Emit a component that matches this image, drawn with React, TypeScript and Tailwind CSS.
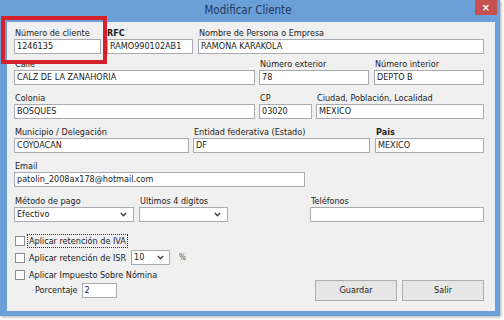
import React from "react";

const font = {
  fontFamily: '"DejaVu Sans Condensed", "Liberation Sans", Arial, sans-serif',
};

const Chevron = () => (
  <svg width="7" height="5" viewBox="0 0 7 5" className="shrink-0">
    <polyline points="0.8,1 3.5,3.8 6.2,1" fill="none" stroke="#3c3c3c" strokeWidth="1.3" />
  </svg>
);

interface FieldProps {
  label: string;
  value?: string;
  w: string;
  bold?: boolean;
  labelPad?: string;
}

const Field = ({ label, value, w, bold, labelPad }: FieldProps) => (
  <div className={`flex flex-col ${w}`}>
    <div className={`h-[12px] leading-[12px] text-[9px] text-[#1b1b1b] whitespace-nowrap ${labelPad ?? "pl-[1px]"} ${bold ? "font-bold" : ""}`}>
      {label}
    </div>
    <div className="h-[15px] bg-white border border-[#a9abb0] flex items-center px-[2px] text-[9px] text-[#1b1b1b] whitespace-nowrap overflow-hidden">
      {value}
    </div>
  </div>
);

const Select = ({ label, value, w }: { label?: string; value: string; w: string }) => (
  <div className={`flex flex-col ${w}`}>
    {label && (
      <div className="h-[12px] leading-[12px] text-[9px] text-[#1b1b1b] whitespace-nowrap pl-[1px]">{label}</div>
    )}
    <div className="h-[15px] bg-white border border-[#a9abb0] flex items-center justify-between pl-[2px] pr-[6px] text-[9px] text-[#1b1b1b]">
      <span>{value}</span>
      <Chevron />
    </div>
  </div>
);

const Check = ({ children, focused }: { children: React.ReactNode; focused?: boolean }) => (
  <div className="h-[17px] flex items-center pl-[1px]">
    <div className="w-[10px] h-[10px] border border-[#8e8e8e] bg-[#fbfbfb] shrink-0" />
    <div
      className={`ml-[3px] text-[9px] text-[#1b1b1b] leading-[12px] whitespace-nowrap px-[1px] ${
        focused ? "outline outline-1 outline-dotted outline-[#333]" : ""
      }`}
    >
      {children}
    </div>
  </div>
);

const Btn = ({ text }: { text: string }) => (
  <div className="w-[82px] h-[21px] bg-[#e6e6e6] border border-[#adadad] flex items-center justify-center text-[9px] text-[#1b1b1b]">
    {text}
  </div>
);

export default function App() {
  return (
    <div className="w-[504px] h-[320px] bg-white relative overflow-hidden" style={font}>
      <div className="w-[500px] h-[316px] bg-[#6b9fd8] flex flex-col pl-[7px] pr-[5px] pb-[5px] shadow-[1px_1px_3px_rgba(0,0,0,0.35)]">
        <div className="h-[22px] relative flex items-center justify-center">
          <span className="text-[11.5px] text-[#23395a] pr-[6px]">Modificar Cliente</span>
          <div className="absolute right-[-2px] top-0 w-[22px] h-[15px] bg-[#c75050] flex items-center justify-center text-white text-[11px] leading-none font-bold">
            ×
          </div>
        </div>
        <div className="flex-1 bg-[#f0f0f0] flex flex-col pl-[7px] pr-[11px]">
          <div className="flex mt-[5px]">
            <Field label="Número de cliente" value="1246135" w="w-[87px]" />
            <Field label="RFC" value="RAMO990102AB1" w="w-[86px] ml-[6px]" bold labelPad="pl-0" />
            <Field label="Nombre de Persona o Empresa" value="RAMONA KARAKOLA" w="flex-1 ml-[5px]" />
          </div>
          <div className="flex mt-[4px]">
            <Field label="Calle" value="CALZ DE LA ZANAHORIA" w="w-[241px]" />
            <Field label="Número exterior" value="78" w="w-[110px] ml-[4px]" />
            <Field label="Número interior" value="DEPTO B" w="flex-1 ml-[5px]" />
          </div>
          <div className="flex mt-[7px]">
            <Field label="Colonia" value="BOSQUES" w="w-[241px]" />
            <Field label="CP" value="03020" w="w-[53px] ml-[4px]" />
            <Field label="Ciudad, Población, Localidad" value="MEXICO" w="flex-1 ml-[4px]" />
          </div>
          <div className="flex mt-[7px]">
            <Field label="Municipio / Delegación" value="COYOACAN" w="w-[175px]" />
            <Field label="Entidad federativa (Estado)" value="DF" w="w-[177px] ml-[4px]" />
            <Field label="Pais" value="MEXICO" w="flex-1 ml-[5px]" bold />
          </div>
          <div className="flex mt-[7px]">
            <Field label="Email" value="patolin_2008ax178@hotmail.com" w="w-[291px]" />
          </div>
          <div className="flex mt-[8px]">
            <Select label="Método de pago" value="Efectivo" w="w-[120px]" />
            <Select label="Ultimos 4 digitos" value="" w="w-[89px] ml-[5px]" />
            <Field label="Teléfonos" value="" w="flex-1 ml-[82px]" />
          </div>
          <div className="flex justify-between h-[69px] mt-[10px]">
            <div className="flex flex-col">
              <Check focused>Aplicar retención de IVA</Check>
              <div className="flex items-center">
                <Check>Aplicar retención de ISR</Check>
                <div className="ml-[4px] w-[39px] h-[15px] bg-white border border-[#a9abb0] flex items-center justify-between pl-[2px] pr-[5px] text-[9px] text-[#1b1b1b]">
                  <span>10</span>
                  <Chevron />
                </div>
                <span className="ml-[9px] text-[8px] text-[#555]">%</span>
              </div>
              <Check>Aplicar Impuesto Sobre Nómina</Check>
              <div className="flex items-center h-[15px] pl-[21px]">
                <span className="text-[9px] text-[#1b1b1b]">Porcentaje</span>
                <div className="ml-[4px] w-[35px] h-[15px] bg-white border border-[#a9abb0] flex items-center px-[2px] text-[9px] text-[#1b1b1b]">
                  2
                </div>
              </div>
            </div>
            <div className="self-end flex gap-[5px]">
              <Btn text="Guardar" />
              <Btn text="Salir" />
            </div>
          </div>
        </div>
      </div>
      <div className="absolute left-[1px] top-[16px] w-[106px] h-[48px] border-[4px] border-[#d5222c]" />
    </div>
  );
}
